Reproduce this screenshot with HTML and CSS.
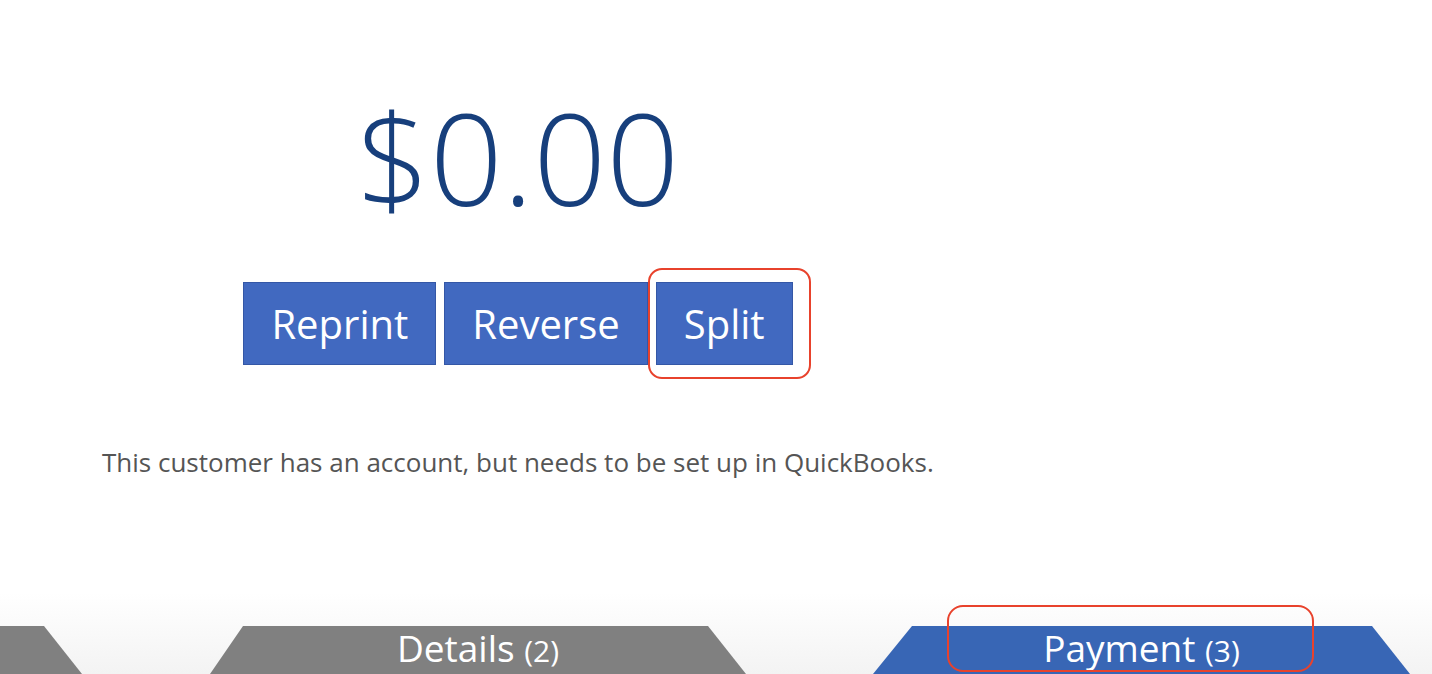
FILE: index.html
```html
<!DOCTYPE html>
<html>
<head>
<meta charset="utf-8">
<link rel="stylesheet" href="styles.css">
</head>
<body>
<div class="page">
  <main class="content">
    <div class="amount">$0.00</div>
    <div class="actions">
      <button class="btn">Reprint</button>
      <button class="btn">Reverse</button>
      <span class="btn-wrap">
        <button class="btn">Split</button>
        <span class="highlight highlight-split"></span>
      </span>
    </div>
    <p class="notice">This customer has an account, but needs to be set up in QuickBooks.</p>
  </main>
  <nav class="tabs">
    <div class="tab tab-prev"></div>
    <div class="tab tab-details">Details <small>(2)</small></div>
    <div class="tab tab-payment">Payment <small>(3)</small></div>
    <span class="highlight highlight-payment"></span>
  </nav>
</div>
</body>
</html>
```

FILE: styles.css
```css
html, body {
  margin: 0;
  padding: 0;
}
body {
  width: 1432px;
  height: 674px;
  overflow: hidden;
  font-family: "Open Sans", "Liberation Sans", sans-serif;
  background: linear-gradient(to bottom, #ffffff 0%, #ffffff 88%, #f3f3f3 100%);
}
.page {
  height: 674px;
  display: flex;
  flex-direction: column;
}
.content {
  width: 1036px;
  flex: 1;
  display: flex;
  flex-direction: column;
  align-items: center;
}
.amount {
  margin-top: 82px;
  font-size: 128px;
  font-weight: 300;
  line-height: 150px;
  color: #173f7c;
  letter-spacing: 0;
}
.actions {
  margin-top: 50px;
  display: flex;
  gap: 8px;
}
.btn-wrap {
  position: relative;
  display: flex;
}
.btn {
  height: 83px;
  padding: 0 27px;
  border: 1px solid #3457a6;
  background: #4169c0;
  color: #ffffff;
  font-family: "Open Sans", "Liberation Sans", sans-serif;
  font-size: 40px;
  line-height: 1;
  cursor: pointer;
}
.highlight {
  position: absolute;
  border: 2px solid #e8422c;
  border-radius: 14px;
  pointer-events: none;
}
.highlight-split {
  left: -8px;
  top: -14px;
  width: 159px;
  height: 107px;
}
.notice {
  align-self: flex-start;
  margin: 79px 0 0 102px;
  font-size: 26px;
  color: #555555;
}
.tabs {
  position: relative;
  height: 48px;
  display: flex;
}
.tab {
  height: 48px;
  color: #ffffff;
  font-size: 37px;
  line-height: 44px;
  text-align: center;
}
.tab small {
  font-size: 30px;
}
.tab-prev {
  width: 82px;
  background: #808080;
  clip-path: polygon(0 0, 44px 0, 100% 100%, 0 100%);
}
.tab-details {
  width: 536px;
  margin-left: 128px;
  background: #808080;
  clip-path: polygon(33px 0, 498px 0, 100% 100%, 0 100%);
}
.tab-payment {
  width: 537px;
  margin-left: 127px;
  background: #3866b5;
  clip-path: polygon(39px 0, 499px 0, 100% 100%, 0 100%);
}
.highlight-payment {
  left: 947px;
  top: -21px;
  width: 363px;
  height: 63px;
  border-radius: 16px;
}
```
